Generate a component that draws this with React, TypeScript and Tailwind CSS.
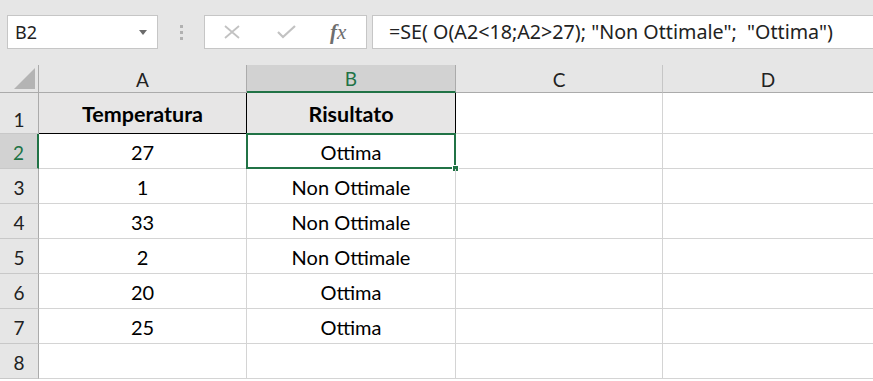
import React from 'react';

const cellFont = { fontFamily: 'Lato, "Open Sans", sans-serif' };

const rows: { n: number; a: string; b: string }[] = [
  { n: 2, a: '27', b: 'Ottima' },
  { n: 3, a: '1', b: 'Non Ottimale' },
  { n: 4, a: '33', b: 'Non Ottimale' },
  { n: 5, a: '2', b: 'Non Ottimale' },
  { n: 6, a: '20', b: 'Ottima' },
  { n: 7, a: '25', b: 'Ottima' },
  { n: 8, a: '', b: '' },
];

function FormulaBar() {
  return (
    <div className="h-[65px] bg-[#e6e6e6] flex items-start pt-[15px]">
      <div className="ml-[7px] w-[151px] h-[34px] bg-white border border-[#c6c6c6] flex items-center justify-between pl-[7px] pr-[10px]">
        <span className="text-[18px] text-[#222]" style={{ fontFamily: '"Noto Sans", "Open Sans", sans-serif' }}>B2</span>
        <svg width="8" height="5" viewBox="0 0 8 5"><path d="M0 0h8L4 5z" fill="#6b6b6b" /></svg>
      </div>
      <div className="w-[46px] h-[34px] flex flex-col items-center justify-center gap-[3px]">
        <span className="w-[3px] h-[3px] bg-[#b1b1b1]" />
        <span className="w-[3px] h-[3px] bg-[#b1b1b1]" />
        <span className="w-[3px] h-[3px] bg-[#b1b1b1]" />
      </div>
      <div className="w-[163px] h-[34px] bg-white border border-[#c6c6c6] flex items-center">
        <svg className="ml-[18px]" width="18" height="14" viewBox="0 0 18 14">
          <path d="M2 1l14 12M16 1L2 13" stroke="#c2c2c2" strokeWidth="1.8" />
        </svg>
        <svg className="ml-[36px]" width="19" height="14" viewBox="0 0 19 14">
          <path d="M1 7l5 5L18 1" stroke="#c2c2c2" strokeWidth="2.2" fill="none" />
        </svg>
        <span className="ml-[34px] text-[21px] italic text-[#6e6e6e] leading-none" style={{ fontFamily: '"Liberation Serif", serif' }}>
          <span className="font-bold">f</span><span>x</span>
        </span>
      </div>
      <div className="ml-[5px] flex-1 -mr-[2px] h-[34px] bg-white border border-[#c6c6c6] flex items-center pl-[16px]">
        <span className="text-[19.7px] text-[#222] whitespace-pre" style={{ fontFamily: '"Noto Sans", "Open Sans", sans-serif' }}>
          =SE( O(A2{'<'}18;A2{'>'}27); "Non Ottimale";  "Ottima")
        </span>
      </div>
    </div>
  );
}

export default function App() {
  return (
    <div className="w-[873px] h-[381px] overflow-hidden bg-white" style={cellFont}>
      <FormulaBar />
      <div className="grid grid-cols-[39px_208px_209px_207px_1fr]">
        {/* column headers */}
        <div className="h-[28px] bg-[#e6e6e6] border-r border-b border-[#ababab] flex items-end justify-end pr-[3px] pb-[3px]">
          <svg width="21" height="21" viewBox="0 0 21 21"><path d="M21 0V21H0z" fill="#b4b4b4" /></svg>
        </div>
        <div className="h-[28px] bg-[#e6e6e6] border-r border-[#ababab] border-b flex items-center justify-center pt-[3px] text-[19px] text-[#222]">A</div>
        <div className="h-[28px] bg-[#d2d2d2] border-r border-r-[#ababab] border-b-2 border-b-[#217346] flex items-center justify-center pt-[3px] text-[19px] text-[#217346]">B</div>
        <div className="h-[28px] bg-[#e6e6e6] border-r border-[#c6c6c6] border-b border-b-[#ababab] flex items-center justify-center pt-[3px] text-[19px] text-[#222]">C</div>
        <div className="h-[28px] bg-[#e6e6e6] border-b border-[#ababab] flex items-center justify-center pt-[3px] text-[19px] text-[#222]">D</div>

        {/* row 1 */}
        <div className="h-[41px] bg-[#e6e6e6] border-r border-r-[#ababab] border-b border-b-[#c8c8c8] flex items-center justify-center pt-[15px] text-[19px] text-[#222]">1</div>
        <div className="h-[41px] bg-[#e7e6e6] border-r border-b border-black flex items-center justify-center pt-[3px] font-bold text-[21.5px] text-black">Temperatura</div>
        <div className="h-[41px] bg-[#e7e6e6] border-r border-b border-black flex items-center justify-center pt-[3px] font-bold text-[21.5px] text-black">Risultato</div>
        <div className="h-[41px] border-r border-b border-[#d4d4d4]" />
        <div className="h-[41px] border-b border-[#d4d4d4]" />

        {rows.map((r) => {
          const sel = r.n === 2;
          return (
            <React.Fragment key={r.n}>
              <div
                className={
                  sel
                    ? 'h-[35px] bg-[#d2d2d2] border-r-2 border-r-[#217346] border-b border-b-[#c8c8c8] flex items-center justify-center pt-[5px] text-[19px] text-[#217346]'
                    : 'h-[35px] bg-[#e6e6e6] border-r border-r-[#ababab] border-b border-b-[#c8c8c8] flex items-center justify-center pt-[5px] text-[19px] text-[#222]'
                }
              >
                {r.n}
              </div>
              <div className="h-[35px] border-r border-b border-[#d4d4d4] flex items-center justify-center pt-[2px] text-[20px] text-black">{r.a}</div>
              <div className="relative h-[35px] border-r border-b border-[#d4d4d4] flex items-center justify-center pt-[2px] text-[20px] text-black">
                {r.b}
                {sel && (
                  <>
                    <div className="absolute -left-[1px] -top-[1px] -right-[1px] -bottom-[1px] border-2 border-[#217346]" />
                    <div className="absolute -right-[4px] -bottom-[4px] w-[7px] h-[7px] bg-[#217346] border border-white" />
                  </>
                )}
              </div>
              <div className="h-[35px] border-r border-b border-[#d4d4d4]" />
              <div className="h-[35px] border-b border-[#d4d4d4]" />
            </React.Fragment>
          );
        })}
      </div>
    </div>
  );
}
